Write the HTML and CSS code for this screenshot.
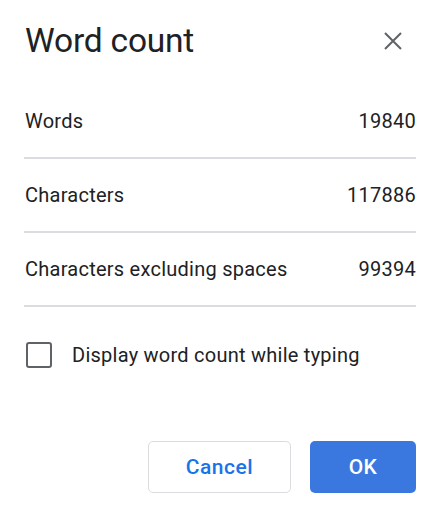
FILE: index.html
```html
<!DOCTYPE html>
<html>
  <head>
    <title>Word count</title>
    <link rel="stylesheet" href="styles.css">
  </head>
  <body>
    <div class="dialog">
      <div class="header">
        <h1 class="title">Word count</h1>
        <button class="close" aria-label="Close">
          <svg width="18" height="18" viewBox="0 0 18 18">
            <path d="M1 1L17 17M17 1L1 17" stroke="#5f6368" stroke-width="2" fill="none"/>
          </svg>
        </button>
      </div>
      <div class="stats">
        <div class="row">
          <span>Words</span>
          <span>19840</span>
        </div>
        <div class="row">
          <span>Characters</span>
          <span>117886</span>
        </div>
        <div class="row">
          <span>Characters excluding spaces</span>
          <span>99394</span>
        </div>
      </div>
      <label class="option">
        <span class="box"></span>
        Display word count while typing
      </label>
      <div class="actions">
        <button class="btn cancel">Cancel</button>
        <button class="btn ok">OK</button>
      </div>
    </div>
  </body>
</html>
```

FILE: styles.css
```css
body, html {
  margin: 0;
  background: #fff;
}

body {
  font-family: Roboto, "Liberation Sans", sans-serif;
  color: #202124;
}

.dialog {
  width: 392px;
  padding: 0 28px 0 24px;
}

.header {
  height: 85px;
  display: flex;
  align-items: center;
  justify-content: space-between;
  padding-bottom: 4px;
  box-sizing: border-box;
}

.title {
  margin: 0 0 0 1px;
  font-size: 33.5px;
  font-weight: 400;
  letter-spacing: -0.2px;
}

.close {
  background: none;
  border: none;
  padding: 0;
  margin-right: 14px;
  display: flex;
}

.row {
  height: 72px;
  display: flex;
  align-items: center;
  justify-content: space-between;
  border-bottom: 2px solid #dadce0;
  font-size: 20px;
  letter-spacing: 0.25px;
  padding: 0 0 0 1px;
}

.option {
  height: 96px;
  display: flex;
  align-items: center;
  gap: 20px;
  font-size: 20px;
  letter-spacing: 0.25px;
  padding-left: 2px;
}

.box {
  width: 22px;
  height: 22px;
  border: 2px solid #5f6368;
  border-radius: 3px;
}

.actions {
  display: flex;
  justify-content: flex-end;
  gap: 19px;
  margin-top: 38px;
}

.btn {
  height: 52px;
  border-radius: 5px;
  font-family: Roboto, "Liberation Sans", sans-serif;
  font-size: 21px;
  font-weight: 500;
  letter-spacing: 0.5px;
}

.cancel {
  width: 143px;
  background: #fff;
  color: #1a73e8;
  border: 1px solid #dadce0;
}

.ok {
  width: 106px;
  background: #3a78e0;
  color: #fff;
  border: none;
}
```
